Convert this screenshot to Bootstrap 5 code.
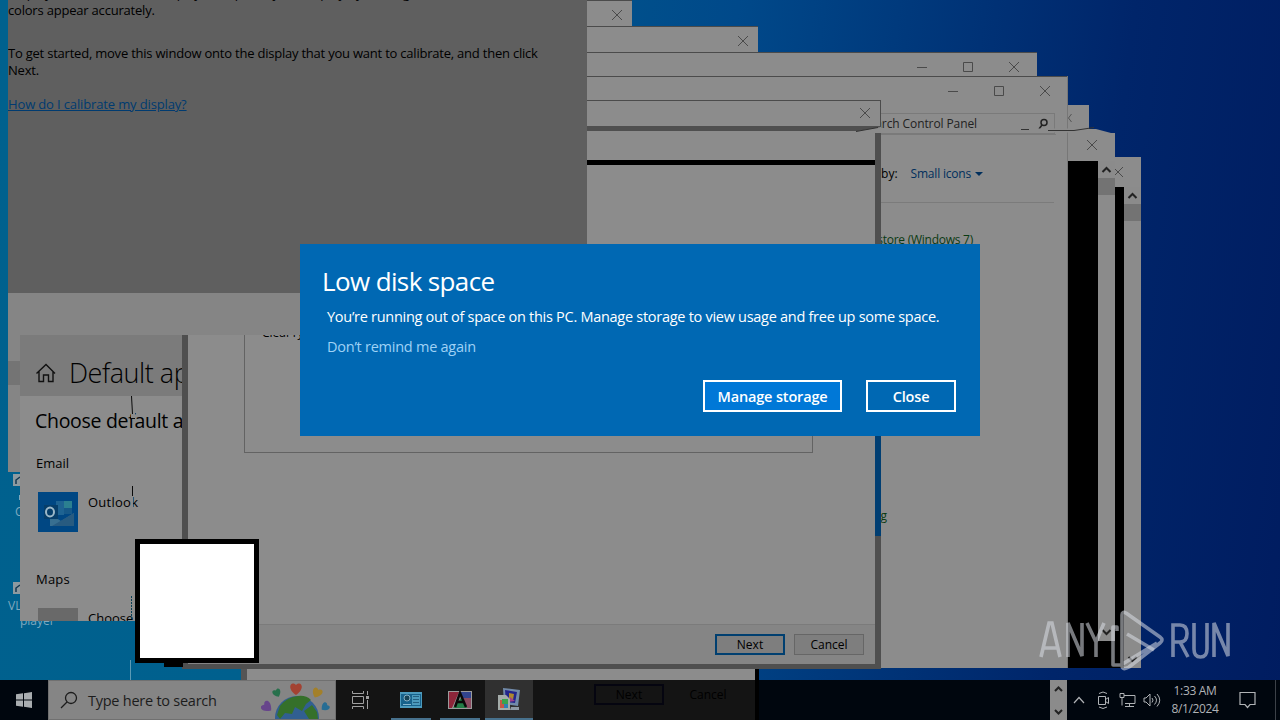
<!DOCTYPE html>
<html lang="en">
<head>
  <meta charset="UTF-8" />
  <title>Low disk space</title>
  <meta name="viewport" content="width=device-width, initial-scale=1.0" />
  <link href="https://cdn.jsdelivr.net/npm/bootstrap@5.3.3/dist/css/bootstrap.min.css" rel="stylesheet" />
  <style>
    body {
      font-family: "Open Sans", "Noto Sans", sans-serif;
      font-size: 12px;
      line-height: 17px;
      color: #000;
      overflow: hidden;
    }
    svg { display: block; flex: none; fill: none; }
    .desktop {
      width: 1280px;
      height: 720px;
      background: linear-gradient(97deg, #00618e 0%, #00608e 25%, #00498a 54%, #003276 72%, #00256a 83%, #001c60 100%);
    }
    .screen { height: 680px; }

    /* windows on the desktop */
    .win { position: absolute; background: #8c8c8c; overflow: hidden; }
    .bar-title { display: flex; justify-content: flex-end; align-items: center; border-top: 1px solid #4b4b4b; }
    .bar-title svg { stroke: #4a4a4a; stroke-width: 1; }
    .win-a { left: 560px; top: 0; width: 72px; height: 27px; }
    .win-b { left: 560px; top: 26px; width: 198px; height: 27px; }
    .win-c { left: 560px; top: 52px; width: 477px; height: 26px; }
    .win-d { left: 1060px; top: 105px; width: 29px; height: 24px; }
    .win-a .bar-title, .win-b .bar-title { height: 28px; padding-right: 9px; }
    .win-c .bar-title, .win-panel .bar-title { height: 28px; padding-right: 17px; gap: 34px; }
    .win-panel .bar-title { padding-right: 16px; }
    .console-back { left: 1068px; top: 157px; width: 73px; height: 511px; }
    .console-front { left: 1068px; top: 133px; width: 47px; height: 508px; }
    .console-foot { left: 1068px; top: 641px; width: 56px; height: 27px; background: #000; }
    .black-pane { background: #000; }
    .scroller { width: 17px; background: #8b8b8b; }
    .scroller .thumb { height: 17px; background: #737373; }
    .win-panel { left: 586px; top: 76px; width: 482px; height: 592px; border-right: 1px solid #777; }
    .panel-search { height: 21px; margin: 9px 12px 0 0; border: 1px solid #7a7a7a; font-size: 12px; color: #222; }
    .panel-line { border-top: 1px solid #7b7b7b; margin-right: 13px; }
    .panel-blue { color: #002f5c; }
    .panel-green { color: #0a3a12; }

    .win-wizard { left: 182px; top: 100px; width: 699px; height: 569px; }
    .win-wizard .bar-title { height: 26px; padding-right: 9px; padding-bottom: 2px; border-right: 1px solid #4b4b4b; }
    .wizard-frame { height: 543px; border: 5px solid #4f4f4f; border-left-width: 6px; border-right-width: 6px; }
    .wizard-rule { height: 5px; margin-top: 29px; background: #000; }
    .wizard-group { height: 188px; margin: 100px 62px 0 56px; border: 1px solid #636363; }
    .wizard-foot { height: 40px; background: #858585; border-top: 1px solid #7b7b7b; }
    .key { width: 70px; height: 21px; border: 1px solid #666; background: #7e7e7e; display: flex; align-items: center; justify-content: center; font-size: 12px; padding-bottom: 1px; }
    .key-default { border: 2px solid #003f70; }
    .side-accent { position: absolute; right: 0; top: 336px; width: 6px; height: 100px; background: #003e72; }

    .win-settings { left: 8px; top: 335px; width: 174px; height: 286px; background: transparent; }
    .settings-strip { width: 12px; height: 137px; background: #858585; }
    .settings-strip .band { height: 24px; margin-top: 26px; background: #747474; }
    .settings-head { height: 61px; background: #7b7b7b; }
    .settings-page { width: 162px; background: #8c8c8c; overflow: hidden; white-space: nowrap; }
    .settings-h1 { font-size: 27px; font-weight: 300; letter-spacing: -.45px; line-height: 34px; }
    .settings-h2 { font-size: 19.5px; letter-spacing: -.3px; line-height: 26px; }
    .settings-text { font-size: 13px; letter-spacing: 0; }
    .tile { flex: none; width: 40px; height: 40px; background: #696969; }

    .win-colour { left: 8px; top: 0; width: 579px; height: 335px; background: #858585; }
    .colour-page { height: 293px; background: #5f5f5f; font-size: 13px; line-height: 17px; overflow: hidden; }
    .colour-page p { margin: 0; white-space: nowrap; }
    .colour-page a { color: #003b70; }

    .win-under { left: 241px; top: 669px; width: 518px; height: 11px; border-left: 6px solid #555; border-right: 4px solid #000; }
    .shortcut { position: absolute; color: #7fa9bf; font-size: 12px; line-height: 16px; }
    .blank-box { position: absolute; left: 135px; top: 539px; width: 124px; height: 124px; border: 5px solid #000; background: #fff; }
    .blank-tail { position: absolute; left: 164px; top: 662px; width: 19px; height: 5px; background: #000; }
    .glitch { position: absolute; left: 0; top: 0; pointer-events: none; }

    /* low disk prompt */
    .prompt { position: absolute; left: 300px; top: 244px; width: 680px; height: 192px; background: #0068b3; color: #fff; padding: 19px 24px 24px 22px; white-space: nowrap; }
    .prompt h1 { font-size: 26px; line-height: 36px; font-weight: 400; margin: 0; letter-spacing: -.62px; }
    .prompt p { margin: 9px 0 0 5px; font-size: 14.5px; line-height: 18px; letter-spacing: -.28px; }
    .prompt a { margin: 12px 0 0 5px; font-size: 14.5px; line-height: 18px; color: #9fd2f6; letter-spacing: -.25px; }
    .prompt .btn { height: 32px; padding: 0; border: 2px solid #fff; border-radius: 0; color: #fff; font-size: 14.5px; font-weight: 600; letter-spacing: -.15px; line-height: 29px; }
    .btn-manage { width: 139px; background: #0078d7; }
    .btn-shut { width: 90px; }

    .taskbar { height: 40px; background: #00060e; }
    .start { width: 48px; }
    .find { width: 288px; background: #858585; border: 1px solid #707070; font-size: 14.5px; color: #1c1c1c; padding-left: 11px; }
    .apps { width: 423px; background: #141414; }
    .app { width: 48px; height: 40px; }
    .app-open { border-bottom: 2px solid #47718d; }
    .app-live { background: #303030; margin-left: 1px; }
    .ghost { height: 34px; color: #000; font-size: 12px; }
    .ghost-key { width: 70px; height: 21px; border: 2px solid #050510; display: flex; align-items: center; justify-content: center; }
    .edge { width: 4px; background: #000; }
    .tray svg { stroke: #b0b3b6; }
    .clock { width: 62px; font-size: 12px; line-height: 18px; color: #b0b3b6; letter-spacing: -.35px; white-space: nowrap; }
    .watermark { position: absolute; left: 1036px; top: 606px; }
  </style>
</head>
<body>
  <div class="desktop d-flex flex-column position-relative overflow-hidden">
    <main class="screen">
      <div class="shortcut" style="left:8px;top:598px">VLC</div>
      <div class="shortcut" style="left:20px;top:613px">player</div>
      <div class="shortcut" style="left:15px;top:504px">C</div>
      <svg class="glitch" width="40" height="640">
        <path fill="#8d9aa0" d="M13 474h7v12h-7zM13 582h7v12h-7z" />
        <path stroke="#143850" stroke-width="1.5" d="M16 484v-4l4-3M16 592v-4l4-3" />
        <path stroke="#7fa9bf" d="M19.500 495v5" />
      </svg>

      <section class="win win-a"><div class="bar-title"><svg width="12" height="12"><path d="M1 1l10 10M11 1L1 11" /></svg></div></section>
      <section class="win win-b"><div class="bar-title"><svg width="12" height="12"><path d="M1 1l10 10M11 1L1 11" /></svg></div></section>
      <section class="win win-c">
        <div class="bar-title">
          <svg width="12" height="12"><path d="M1 6.5h10" /></svg>
          <svg width="12" height="12"><path d="M1.500 1.500h9v9h-9z" /></svg>
          <svg width="12" height="12"><path d="M1 1l10 10M11 1L1 11" /></svg>
        </div>
      </section>
      <section class="win win-d"><svg width="20" height="24"><path stroke="#555" d="M11.500 9l-3 4 3 4" /></svg></section>

      <section class="win console-back d-flex flex-column">
        <div class="d-flex justify-content-end align-items-center" style="height:29px;padding-right:17px"><svg width="12" height="12"><path stroke="#4a4a4a" d="M1 1l10 10M11 1L1 11" /></svg></div>
        <div class="d-flex flex-grow-1" style="margin-top:1px">
          <div class="black-pane flex-grow-1"></div>
          <div class="scroller d-flex flex-column">
            <svg width="17" height="17"><path stroke="#222" stroke-width="2" d="M4.500 11l4-4 4 4" /></svg>
            <div class="thumb"></div>
            <svg class="mt-auto" width="17" height="17"><path stroke="#222" stroke-width="2" d="M4.500 6l4 4 4-4" /></svg>
          </div>
        </div>
      </section>
      <section class="win console-foot"></section>
      <section class="win console-front d-flex flex-column">
        <div class="d-flex justify-content-end align-items-center" style="height:24px;padding-right:17px"><svg width="12" height="12"><path stroke="#4a4a4a" d="M1 1l10 10M11 1L1 11" /></svg></div>
        <div class="d-flex flex-grow-1" style="margin-top:4px">
          <div class="black-pane flex-grow-1"></div>
          <div class="scroller d-flex flex-column">
            <svg width="17" height="17"><path stroke="#222" stroke-width="2" d="M4.500 11l4-4 4 4" /></svg>
            <div class="thumb"></div>
            <svg class="mt-auto" width="17" height="17"><path stroke="#222" stroke-width="2" d="M4.500 6l4 4 4-4" /></svg>
          </div>
        </div>
      </section>

      <section class="win win-panel">
        <div class="bar-title">
          <svg width="12" height="12"><path d="M1 6.500h10" /></svg>
          <svg width="12" height="12"><path d="M1.500 1.500h9v9h-9z" /></svg>
          <svg width="12" height="12"><path d="M1 1l10 10M11 1L1 11" /></svg>
        </div>
        <div class="panel-search d-flex justify-content-end align-items-center" style="padding-right:5px">
          <span style="margin-right:61px;letter-spacing:-.1px">Search Control Panel</span>
          <svg width="11" height="12"><circle cx="6" cy="4.500" r="3" stroke="#222" stroke-width="1.500" /><path stroke="#222" stroke-width="1.500" d="M4 7l-3 4" /></svg>
        </div>
        <div class="d-flex justify-content-end align-items-center" style="margin:31px 83px 0 0">
          <span style="margin-right:13px">View by:</span><span class="panel-blue" style="letter-spacing:-.2px">Small icons</span>
          <svg class="ms-1" width="9" height="6"><path fill="#002f5c" d="M0 1h8L4 5z" /></svg>
        </div>
        <div class="panel-line" style="margin-top:20px"></div>
        <div class="panel-green text-end" style="margin:28px 94px 0 0;letter-spacing:-.25px">Backup and Restore (Windows 7)</div>
        <div class="panel-green text-end" style="margin:259px 180px 0 0">Troubleshooting</div>
      </section>

      <section class="win-under win"></section>

      <section class="win win-wizard">
        <div class="bar-title"><svg width="12" height="12"><path d="M1 1l10 10M11 1L1 11" /></svg></div>
        <div class="wizard-frame d-flex flex-column">
          <div class="wizard-rule"></div>
          <div class="wizard-group d-flex align-items-start"><span style="margin:58px 0 0 17px">ClearType text</span></div>
          <div class="wizard-foot mt-auto d-flex justify-content-end align-items-center" style="gap:9px;padding-right:11px">
            <div class="key key-default">Next</div>
            <div class="key">Cancel</div>
          </div>
        </div>
        <div class="side-accent"></div>
      </section>

      <section class="win win-settings d-flex align-items-start">
        <div class="settings-strip"><div class="band"></div></div>
        <div class="settings-page h-100">
          <div class="settings-head d-flex align-items-center" style="padding:15px 0 0 15px">
            <svg width="22" height="20"><path stroke="#111" stroke-width="1.400" d="M1.500 10.500L11 1.500 20 10.500M4 8.500v10h4.500v-6.500h5v6.500h4.500v-10" /></svg>
            <span class="settings-h1" style="margin-left:12px">Default apps</span>
          </div>
          <div style="padding:12px 0 0 15px">
            <div class="settings-h2">Choose default apps</div>
            <div class="settings-text" style="margin:21px 0 0 1px">Email</div>
            <div class="d-flex" style="margin:20px 0 0 3px">
              <svg width="40" height="40">
                <path fill="#004783" d="M0 0h40v40H0z" />
                <path fill="#1e6392" d="M18 9h8v7h-8zM18 16h8v7h-8z" />
                <path fill="#2b8090" d="M26 9h8v7h-8z" />
                <path fill="#165888" d="M26 16h8v6h-8z" />
                <path fill="#376f91" d="M12 22l11 7 13-8v13H12z" />
                <path fill="#285b80" d="M36 21L14 34h22z" />
                <path fill="#063e6a" d="M6 13h14v14H6z" />
                <ellipse cx="12" cy="20" rx="4" ry="4.500" stroke="#9cb8c8" stroke-width="2" />
              </svg>
              <span class="settings-text" style="margin:2px 0 0 10px;letter-spacing:.25px">Outlook</span>
            </div>
            <div class="settings-text" style="margin:39px 0 0 1px;letter-spacing:.2px">Maps</div>
            <div class="d-flex" style="margin:20px 0 0 3px">
              <div class="tile"></div>
              <span class="settings-text" style="margin:2px 0 0 10px">Choose a default</span>
            </div>
          </div>
        </div>
      </section>

      <section class="win win-colour">
        <div class="colour-page">
          <div style="margin-top:-15px">
            <p style="letter-spacing:-.08px">Display Color Calibration helps you improve your display by making sure that</p>
            <p style="letter-spacing:-.2px">colors appear accurately.</p>
            <p style="margin-top:26px;letter-spacing:-.22px">To get started, move this window onto the display that you want to calibrate, and then click</p>
            <p style="letter-spacing:-.22px">Next.</p>
            <p style="margin-top:17px;letter-spacing:-.14px"><a href="#">How do I calibrate my display?</a></p>
          </div>
        </div>
      </section>

      <!-- torn redraw lines left by the pointer -->
      <svg class="glitch" width="1280" height="720">
        <path fill="#8c8c8c" d="M858 131l23-4v6h-22zM881 128.500h187v4H881z" />
        <path fill="#8c8c8c" d="M1068 129h28l15 4h-43z" />
        <path stroke="#333" d="M856 131.500l22-4M1048 130.500h26l20-3M1021 129.500h8" />
        <path stroke="#7a7a7a" d="M881 134.500h175" />
        <path fill="#8c8c8c" d="M131 412h4v7h-4zM131 497h2v11h-2z" />
        <path stroke="#0a0a0a" d="M131.500 396l1 18M130 418.500h5M132.500 486v10" />
        <path stroke="#063d55" stroke-dasharray="2 1" d="M131.500 596v24" />
        <path stroke="#5c9ab5" d="M130.500 660v20" />
      </svg>
      <div class="blank-box"></div>
      <div class="blank-tail"></div>

      <section class="prompt d-flex flex-column align-items-start">
        <h1>Low disk space</h1>
        <p>You’re running out of space on this PC. Manage storage to view usage and free up some space.</p>
        <a class="text-decoration-none" href="#">Don’t remind me again</a>
        <div class="d-flex gap-4 mt-auto ms-auto">
          <button type="button" class="btn btn-manage">Manage storage</button>
          <button type="button" class="btn btn-shut">Close</button>
        </div>
      </section>
    </main>

    <footer class="taskbar d-flex">
      <div class="start d-flex align-items-center justify-content-center">
        <svg width="16" height="16"><path fill="#a9adb0" d="M0 2.300L7 1.300V7.500H0zM8 1.200L16 0v7.500H8zM0 8.500h7v6.200L0 13.700zM8 8.500h8V16l-8-1.200z" /></svg>
      </div>
      <div class="find d-flex align-items-center">
        <svg width="18" height="18"><circle cx="11" cy="7" r="5.500" stroke="#1c1c1c" stroke-width="1.300" /><path stroke="#1c1c1c" stroke-width="1.300" d="M7 11l-6 6" /></svg>
        <span style="margin-left:10px;letter-spacing:-.25px">Type here to search</span>
        <svg class="ms-auto me-1" width="70" height="38">
          <defs><path id="heart" d="M0 6C-10-1-5-9 0-4 5-9 10-1 0 6z" /></defs>
          <circle cx="36" cy="37" r="22" fill="#315f91" />
          <path fill="#35702a" d="M19 25q7-9 18-10 8-1 13 4l-5 4-4 7-7-4-3 7-7-1-5 6-3-4zM43 30l8-6 5 7 1 7h-9z" />
          <use href="#heart" transform="translate(35 8)" fill="#a34232" />
          <use href="#heart" transform="translate(56 12) rotate(25) scale(.85)" fill="#a3802a" />
          <use href="#heart" transform="translate(16 12) rotate(-25) scale(.7)" fill="#28704c" />
          <use href="#heart" transform="translate(6 26) rotate(-50) scale(.9)" fill="#67458b" />
          <use href="#heart" transform="translate(64 26) rotate(50) scale(.7)" fill="#276d94" />
        </svg>
      </div>
      <div class="apps d-flex">
        <div class="app d-flex align-items-center justify-content-center">
          <svg width="17" height="18"><path stroke="#a0a0a0" d="M.5 0v2.500h11V0M.5 5.500h11v7H.5zM.5 18v-2.500h11V18M15.500 0v4M15.500 9v9" /><path fill="#a0a0a0" d="M14 5h3v3h-3z" /></svg>
        </div>
        <div class="d-flex" style="gap:1px">
          <div class="app d-flex align-items-center justify-content-center" style="margin-left:3px">
            <svg width="40" height="40"><path fill="#4c9abd" d="M9 12h22v16H9z" /><path fill="#17628c" d="M10 14h20v12H10z" /><path fill="#4c9abd" d="M21 15h8v10h-8z" /><circle cx="16" cy="18" r="3" fill="#174458" stroke="#86aec2" /><path stroke="#245f80" d="M22 16.500h6M22 19.500h6M22 22.500h6" /><path stroke="#88b7ce" d="M12 24.500h8" /><path fill="#47718d" d="M0 38h40v2H0z" /></svg>
          </div>
          <div class="app d-flex align-items-center justify-content-center">
            <svg width="40" height="40"><path fill="#9b9b9b" d="M8 11h24v18H8z" /><path fill="#8d263a" d="M9 12h10L12 28H9z" /><path fill="#237d47" d="M13 28l8-10 7 10z" /><path fill="#32448e" d="M20 12h11v6h-8z" /><path fill="#8a4a60" d="M23 18h8v10h-4z" /><path stroke="#090909" stroke-width="2.500" d="M15 27l5-14 6 14M17 22h7" /><path fill="#47718d" d="M0 38h40v2H0z" /></svg>
          </div>
        </div>
        <div class="app app-live app-open d-flex align-items-center justify-content-center">
          <svg width="24" height="24"><path fill="#718aa9" d="M6 1l17 2-2 16-14-2z" /><path fill="#23258b" d="M8 3l12 2-2 11-9-1z" /><path fill="#ad8830" d="M12 6l5 1-1 6-4-1z" /><path fill="#a04288" d="M13 10l5 4-7 1z" /><path fill="#a4aca9" d="M1 8h8l4 4v11H1z" /><path fill="#c65744" d="M3 13h4v8H3z" /><path fill="#39a34e" d="M5 12h6v5H5z" /><path fill="#2f80b2" d="M7 17h4v4H7z" /><path fill="#8f9aa4" d="M14 20h8v3h-9z" /></svg>
        </div>
        <div class="ghost d-flex align-items-center flex-grow-1 justify-content-end" style="padding:0 8px 6px 0">
          <div class="ghost-key">Next</div>
          <div class="ghost-key border-0" style="margin-left:9px;margin-right:4px">Cancel</div>
        </div>
        <div class="edge"></div>
      </div>
      <div class="tray d-flex align-items-center ms-auto">
        <div class="scroller h-100 d-flex flex-column justify-content-between">
          <svg width="17" height="18"><path style="stroke:#222" stroke-width="2" d="M5 11l3.500-3.500L12 11" /></svg>
          <svg width="17" height="18"><path style="stroke:#222" stroke-width="2" d="M5 8l3.500 3.500L12 8" /></svg>
        </div>
        <svg style="margin-left:6px" width="12" height="10"><path stroke-width="1.200" d="M1 8l5-5.500L11 8" /></svg>
        <svg style="margin-left:12px" width="13" height="18"><path d="M1.500 5.500h7v8h-7zM8.500 8.500l3-2v6l-3-2M2 2.500q4-3 8 0M2 16q4 3 8 0" /></svg>
        <svg style="margin-left:9px" width="17" height="14"><path d="M5 2.500h11v8H6M1 .5h4v4H1zM3 4.500v8M10.500 10.500v3M6 13.500h9" /></svg>
        <svg style="margin-left:7px" width="18" height="14"><path d="M1 5h2l4-4v12L3 9H1zM9 5q2 2 0 4.500M11.500 3q4 4 0 8.500M14 1q5.500 6 0 12.500" /></svg>
        <div class="clock text-center" style="margin-left:3px">1:33 AM<br />8/1/2024</div>
        <svg style="margin-left:13px" width="18" height="18"><path stroke-width="1.200" d="M1 1.500h15v12h-5l-2.500 3-2.500-3H1z" /></svg>
        <div class="h-100" style="width:19px;border-right:1px solid #3c4148"></div>
        <div style="width:4px"></div>
      </div>
    </footer>

    <svg class="watermark" width="200" height="70">
      <g stroke="#d9dce3" stroke-opacity=".55" stroke-width="3.600">
        <path d="M5 51L13 17h3l8 34M8 42h13" />
        <path d="M32 51V17l14 33V17" />
        <path d="M51 17l9 19 8-19M60 36v15" />
        <path stroke-linejoin="round" d="M81 25v-4h-4v38h8l36-22M86 59V9q0-4 4-2l34 24q4 3 0 6L93 61q-7 4-7-2" />
        <path stroke-linejoin="round" d="M91 28l27 16" />
        <path d="M137 51V19h7q7 0 7 8.500 0 8.500-7 8.500h-7M144 36l8 15" />
        <path d="M158 17v26q0 8 6.500 8t6.500-8V17" />
        <path d="M178 51V17l14 33V17" />
      </g>
    </svg>
  </div>
  <script src="https://cdn.jsdelivr.net/npm/bootstrap@5.3.3/dist/js/bootstrap.bundle.min.js"></script>
</body>
</html>
